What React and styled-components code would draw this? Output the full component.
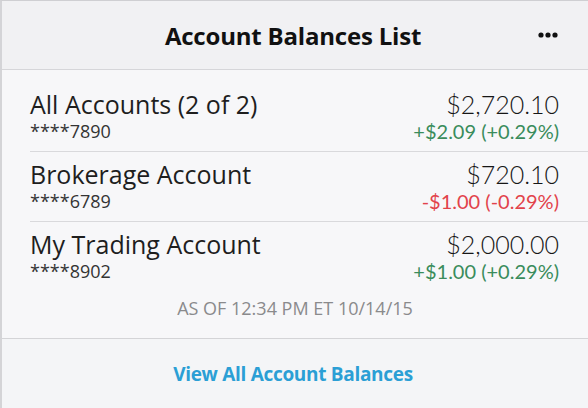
import React from 'react';
import styled, { createGlobalStyle } from 'styled-components';

const GlobalStyle = createGlobalStyle`
  html, body {
    margin: 0;
    padding: 0;
    background: #f7f7f9;
  }

  body {
    font-family: "Open Sans", "Liberation Sans", sans-serif;
    color: #222;
  }
`;

const Card = styled.div`
  display: flex;
  flex-direction: column;
  width: 588px;
  height: 408px;
  box-sizing: border-box;
  border-top: 1px solid #cfcfd2;
  border-left: 2px solid #d4d4d7;
  background: #f7f7f9;
  overflow: hidden;
`;

const Header = styled.header`
  display: grid;
  grid-template-columns: 1fr auto 1fr;
  align-items: center;
  height: 68px;
  flex-shrink: 0;
  background: #f1f1f3;
  border-bottom: 1px solid #d6d6d9;

  h1 {
    grid-column: 2;
    margin: 0 0 0 -4px;
    font-size: 24px;
    font-weight: 700;
    color: #111;
    letter-spacing: -0.2px;
  }
`;

const MenuButton = styled.button`
  justify-self: end;
  display: flex;
  align-items: center;
  margin-right: 30px;
  padding: 0;
  border: 0;
  background: none;
  cursor: pointer;
`;

const List = styled.ul`
  list-style: none;
  margin: 0;
  padding: 12px 0 0 28px;
`;

const Row = styled.li`
  display: flex;
  justify-content: space-between;
  padding: 7px 29px 9px 0;
  border-bottom: ${({ $last }) => ($last ? 'none' : '1px solid #d9d9dc')};
`;

const Cell = styled.div`
  display: flex;
  flex-direction: column;
  align-items: ${({ $right }) => ($right ? 'flex-end' : 'flex-start')};
`;

const Name = styled.span`
  font-size: 25px;
  line-height: 31px;
  color: #1e1e1e;
`;

const Number = styled.span`
  font-size: 18px;
  line-height: 22px;
  color: #333;
`;

const Amount = styled.span`
  font-family: Lato, "Open Sans", sans-serif;
  font-size: 25px;
  font-weight: 300;
  line-height: 31px;
  color: #161616;
`;

const Change = styled.span`
  font-family: Lato, "Open Sans", sans-serif;
  font-size: 20px;
  font-weight: 400;
  line-height: 22px;
  color: ${({ $down }) => ($down ? '#e2434b' : '#3a8c5c')};
`;

const Stamp = styled.p`
  margin: 6px 0 0;
  text-align: center;
  font-size: 18px;
  line-height: 22px;
  color: #8a8a8c;
`;

const Footer = styled.footer`
  display: flex;
  align-items: center;
  justify-content: center;
  margin-top: auto;
  height: 69px;
  background: #f4f5f7;
  border-top: 1px solid #d4d4d7;

  a {
    margin-left: -4px;
    font-size: 19px;
    font-weight: 700;
    color: #2b9fd5;
    text-decoration: none;
    letter-spacing: -0.3px;
  }
`;

const accounts = [
  { name: 'All Accounts (2 of 2)', number: '****7890', amount: '$2,720.10', change: '+$2.09 (+0.29%)' },
  { name: 'Brokerage Account', number: '****6789', amount: '$720.10', change: '-$1.00 (-0.29%)', down: true },
  { name: 'My Trading Account', number: '****8902', amount: '$2,000.00', change: '+$1.00 (+0.29%)' },
];

const Dots = () => (
  <svg width="20" height="6" viewBox="0 0 20 6">
    <circle cx="3" cy="3" r="2.6" fill="#111" />
    <circle cx="10" cy="3" r="2.6" fill="#111" />
    <circle cx="17" cy="3" r="2.6" fill="#111" />
  </svg>
);

const App = () => (
  <>
    <GlobalStyle />
    <Card>
      <Header>
        <h1>Account Balances List</h1>
        <MenuButton aria-label="More">
          <Dots />
        </MenuButton>
      </Header>
      <List>
        {accounts.map((a, i) => (
          <Row key={a.number} $last={i === accounts.length - 1}>
            <Cell>
              <Name>{a.name}</Name>
              <Number>{a.number}</Number>
            </Cell>
            <Cell $right>
              <Amount>{a.amount}</Amount>
              <Change $down={a.down}>{a.change}</Change>
            </Cell>
          </Row>
        ))}
      </List>
      <Stamp>AS OF 12:34 PM ET 10/14/15</Stamp>
      <Footer>
        <a href="#balances">View All Account Balances</a>
      </Footer>
    </Card>
  </>
);

export default App;
